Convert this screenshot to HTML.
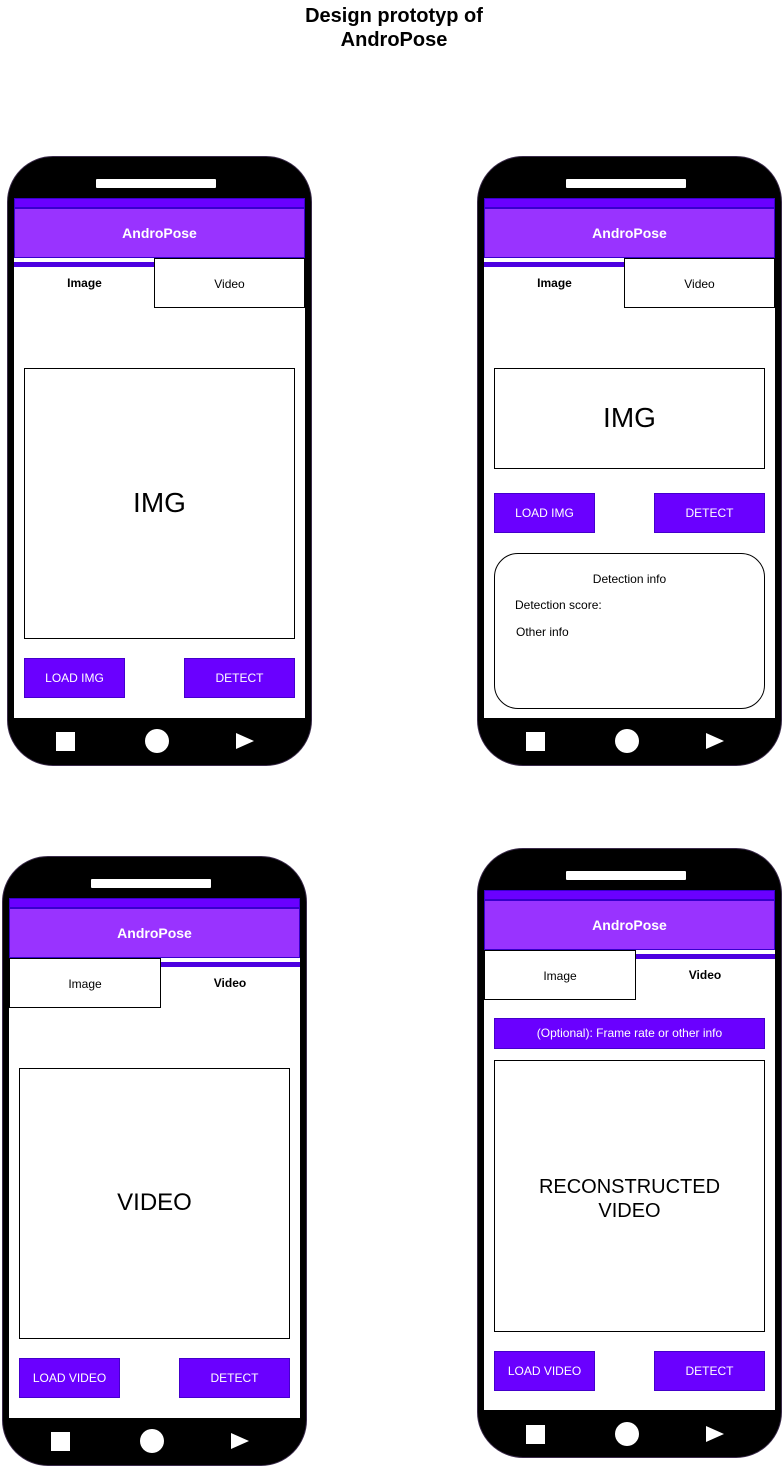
<!DOCTYPE html>
<html><head><meta charset="utf-8"><style>
*{margin:0;padding:0;box-sizing:border-box}
body{width:783px;height:1468px;background:#fff;position:relative;font-family:"Liberation Sans",Arial,sans-serif;overflow:hidden}
.title{position:absolute;left:0;width:788px;top:4px;text-align:center;font-weight:bold;font-size:20px;line-height:24px;color:#000}
.ph{position:absolute;width:305px;height:610px;background:#000;border-radius:46px;border:1px solid #3a2a4a}
.ab{position:absolute}
.spk{left:88px;top:22px;width:120px;height:9px;background:#fff;border-radius:1px}
.scr{left:6px;top:41px;width:291px;height:520px;background:#fff}
.tb{left:6px;top:41px;width:291px;height:10px;background:#6a00ff;border:1px solid #3700cc}
.hd{left:6px;top:51px;width:291px;height:50px;background:#9933ff;border:1px solid #3700cc;color:#fff;font-weight:bold;font-size:14px;line-height:48px;text-align:center}
.ul{height:5px;background:#4c00e0;top:105px}
.tab{top:101px;height:50px;font-size:12px;line-height:50px;text-align:center;color:#000}
.tabb{border:1px solid #000;background:#fff}
.box{border:1px solid #000;background:#fff;text-align:center;color:#000}
.btn{background:#6a00ff;border:1px solid #4400cc;color:#fff;font-size:12px;line-height:38px;text-align:center;height:40px;top:501px}
.sq{left:48px;top:575px;width:19px;height:19px;background:#fff}
.ci{left:137px;top:572px;width:24px;height:24px;border-radius:50%;background:#fff}
.tr{left:228px;top:576px;width:0;height:0;border-top:8px solid transparent;border-bottom:8px solid transparent;border-left:18px solid #fff}
</style></head><body>
<div class="title">Design prototyp of<br>AndroPose</div>

<!-- Phone 1 -->
<div class="ph" style="left:7px;top:156px">
<div class="ab spk"></div><div class="ab scr"></div><div class="ab tb"></div>
<div class="ab hd">AndroPose</div>
<div class="ab ul" style="left:6px;width:142px"></div>
<div class="ab tab" style="left:6px;width:141px;font-weight:bold">Image</div>
<div class="ab tab tabb" style="left:146px;width:151px">Video</div>
<div class="ab box" style="left:16px;top:211px;width:271px;height:271px;font-size:28px;line-height:268px">IMG</div>
<div class="ab btn" style="left:16px;width:101px">LOAD IMG</div>
<div class="ab btn" style="left:176px;width:111px">DETECT</div>
<div class="ab sq"></div><div class="ab ci"></div><div class="ab tr"></div>
</div>

<!-- Phone 2 -->
<div class="ph" style="left:477px;top:156px">
<div class="ab spk"></div><div class="ab scr"></div><div class="ab tb"></div>
<div class="ab hd">AndroPose</div>
<div class="ab ul" style="left:6px;width:142px"></div>
<div class="ab tab" style="left:6px;width:141px;font-weight:bold">Image</div>
<div class="ab tab tabb" style="left:146px;width:151px">Video</div>
<div class="ab box" style="left:16px;top:211px;width:271px;height:101px;font-size:28px;line-height:98px">IMG</div>
<div class="ab btn" style="left:16px;width:101px;top:336px">LOAD IMG</div>
<div class="ab btn" style="left:176px;width:111px;top:336px">DETECT</div>
<div class="ab box" style="left:16px;top:396px;width:271px;height:156px;border-radius:24px;font-size:12px;text-align:left">
<div class="ab" style="left:0;width:269px;top:18px;text-align:center">Detection info</div>
<div class="ab" style="left:20px;top:44px">Detection score:</div>
<div class="ab" style="left:21px;top:71px">Other info</div>
</div>
<div class="ab sq"></div><div class="ab ci"></div><div class="ab tr"></div>
</div>

<!-- Phone 3 -->
<div class="ph" style="left:2px;top:856px">
<div class="ab spk"></div><div class="ab scr"></div><div class="ab tb"></div>
<div class="ab hd">AndroPose</div>
<div class="ab ul" style="left:157px;width:140px"></div>
<div class="ab tab tabb" style="left:6px;width:152px">Image</div>
<div class="ab tab" style="left:157px;width:140px;font-weight:bold">Video</div>
<div class="ab box" style="left:16px;top:211px;width:271px;height:271px;font-size:24px;line-height:268px">VIDEO</div>
<div class="ab btn" style="left:16px;width:101px">LOAD VIDEO</div>
<div class="ab btn" style="left:176px;width:111px">DETECT</div>
<div class="ab sq"></div><div class="ab ci"></div><div class="ab tr"></div>
</div>

<!-- Phone 4 -->
<div class="ph" style="left:477px;top:848px">
<div class="ab spk"></div><div class="ab scr"></div><div class="ab tb"></div>
<div class="ab hd">AndroPose</div>
<div class="ab ul" style="left:157px;width:140px"></div>
<div class="ab tab tabb" style="left:6px;width:152px">Image</div>
<div class="ab tab" style="left:157px;width:140px;font-weight:bold">Video</div>
<div class="ab btn" style="left:16px;width:271px;top:169px;height:31px;line-height:29px">(Optional): Frame rate or other info</div>
<div class="ab box" style="left:16px;top:211px;width:271px;height:272px;font-size:20px;line-height:24px;padding-top:114px">RECONSTRUCTED<br>VIDEO</div>
<div class="ab btn" style="left:16px;width:101px;top:502px">LOAD VIDEO</div>
<div class="ab btn" style="left:176px;width:111px;top:502px">DETECT</div>
<div class="ab sq" style="top:576px"></div><div class="ab ci" style="top:573px"></div><div class="ab tr" style="top:577px"></div>
</div>
</body></html>
